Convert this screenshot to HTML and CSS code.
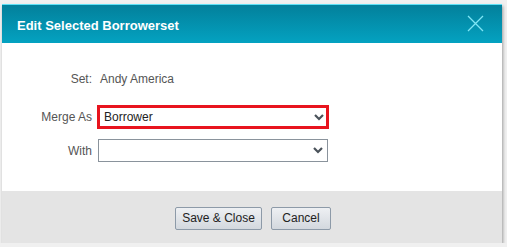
FILE: index.html
```html
<!DOCTYPE html>
<html lang="en">
<head>
    <meta charset="UTF-8">
    <title>Edit Selected Borrowerset</title>
    <link rel="stylesheet" href="styles.css">
</head>
<body>
    <div class="dialog">
        <div class="dialog-header">
            <span class="dialog-title">Edit Selected Borrowerset</span>
            <svg class="close" width="17" height="17" viewBox="0 0 17 17">
                <path d="M1 1L16 16M16 1L1 16" stroke="#7fe6f5" stroke-width="1.3" fill="none"/>
            </svg>
        </div>
        <div class="dialog-body">
            <div class="row row-set">
                <span class="label">Set:</span>
                <span class="value">Andy America</span>
            </div>
            <div class="row">
                <span class="label">Merge As</span>
                <div class="select select-active">
                    <span>Borrower</span>
                    <svg class="chevron" width="10" height="7" viewBox="0 0 10 7"><path d="M1 1L5 5L9 1" stroke="#4a525a" stroke-width="2.2" fill="none"/></svg>
                </div>
            </div>
            <div class="row">
                <span class="label">With</span>
                <div class="select">
                    <span></span>
                    <svg class="chevron" width="10" height="7" viewBox="0 0 10 7"><path d="M1 1L5 5L9 1" stroke="#4a525a" stroke-width="2.2" fill="none"/></svg>
                </div>
            </div>
        </div>
        <div class="dialog-footer">
            <button class="btn btn-save">Save &amp; Close</button>
            <button class="btn btn-cancel">Cancel</button>
        </div>
    </div>
</body>
</html>
```

FILE: styles.css
```css
body {
    margin: 0;
    padding: 4px 0 0 2px;
    background-color: #f0f0f0;
    font-family: Arial, "Liberation Sans", sans-serif;
    font-size: 12px;
    color: #555;
}
.dialog {
    width: 500px;
    background-color: #fff;
    box-shadow: 1px 2px 3px rgba(0, 0, 0, 0.35);
}
.dialog-header {
    height: 38px;
    border-top: 1px solid #5ee0f5;
    background: linear-gradient(to bottom, #03809b, #04a2c1);
    display: flex;
    align-items: center;
    justify-content: space-between;
    padding: 0 18px 0 15px;
}
.dialog-title {
    color: #fff;
    font-weight: bold;
    font-size: 13px;
    margin-top: 3px;
}
.close {
    margin-top: -2px;
}
.dialog-body {
    height: 148px;
    padding-top: 29px;
    box-sizing: border-box;
    display: flex;
    flex-direction: column;
}
.row {
    display: flex;
    align-items: center;
    margin-bottom: 10px;
}
.row-set {
    margin-bottom: 19px;
}
.label {
    width: 90px;
    text-align: right;
    margin-right: 6px;
}
.value {
    margin-left: 2px;
}
.select {
    width: 230px;
    height: 23px;
    box-sizing: border-box;
    border: 1px solid #8a939c;
    display: flex;
    align-items: center;
    justify-content: space-between;
    padding: 0 4px 0 5px;
    color: #222;
    font-size: 12px;
}
.select-active {
    border: 3px solid #e8141e;
    width: 232px;
    height: 24px;
    margin-left: -1px;
    padding: 0 2px 0 4px;
}
.dialog-footer {
    height: 52px;
    background-color: #e4e4e4;
    display: flex;
    justify-content: center;
    align-items: center;
    gap: 9px;
    padding-left: 2px;
}
.btn {
    height: 23px;
    font-family: Arial, "Liberation Sans", sans-serif;
    font-size: 12px;
    color: #222;
    border: 1px solid #8d9aa8;
    border-radius: 2px;
    background: linear-gradient(to bottom, #eef0f3, #d3d8de);
    padding: 0 6px;
    margin-top: 2px;
}
.btn-save {
    width: 87px;
}
.btn-cancel {
    width: 60px;
}
```
